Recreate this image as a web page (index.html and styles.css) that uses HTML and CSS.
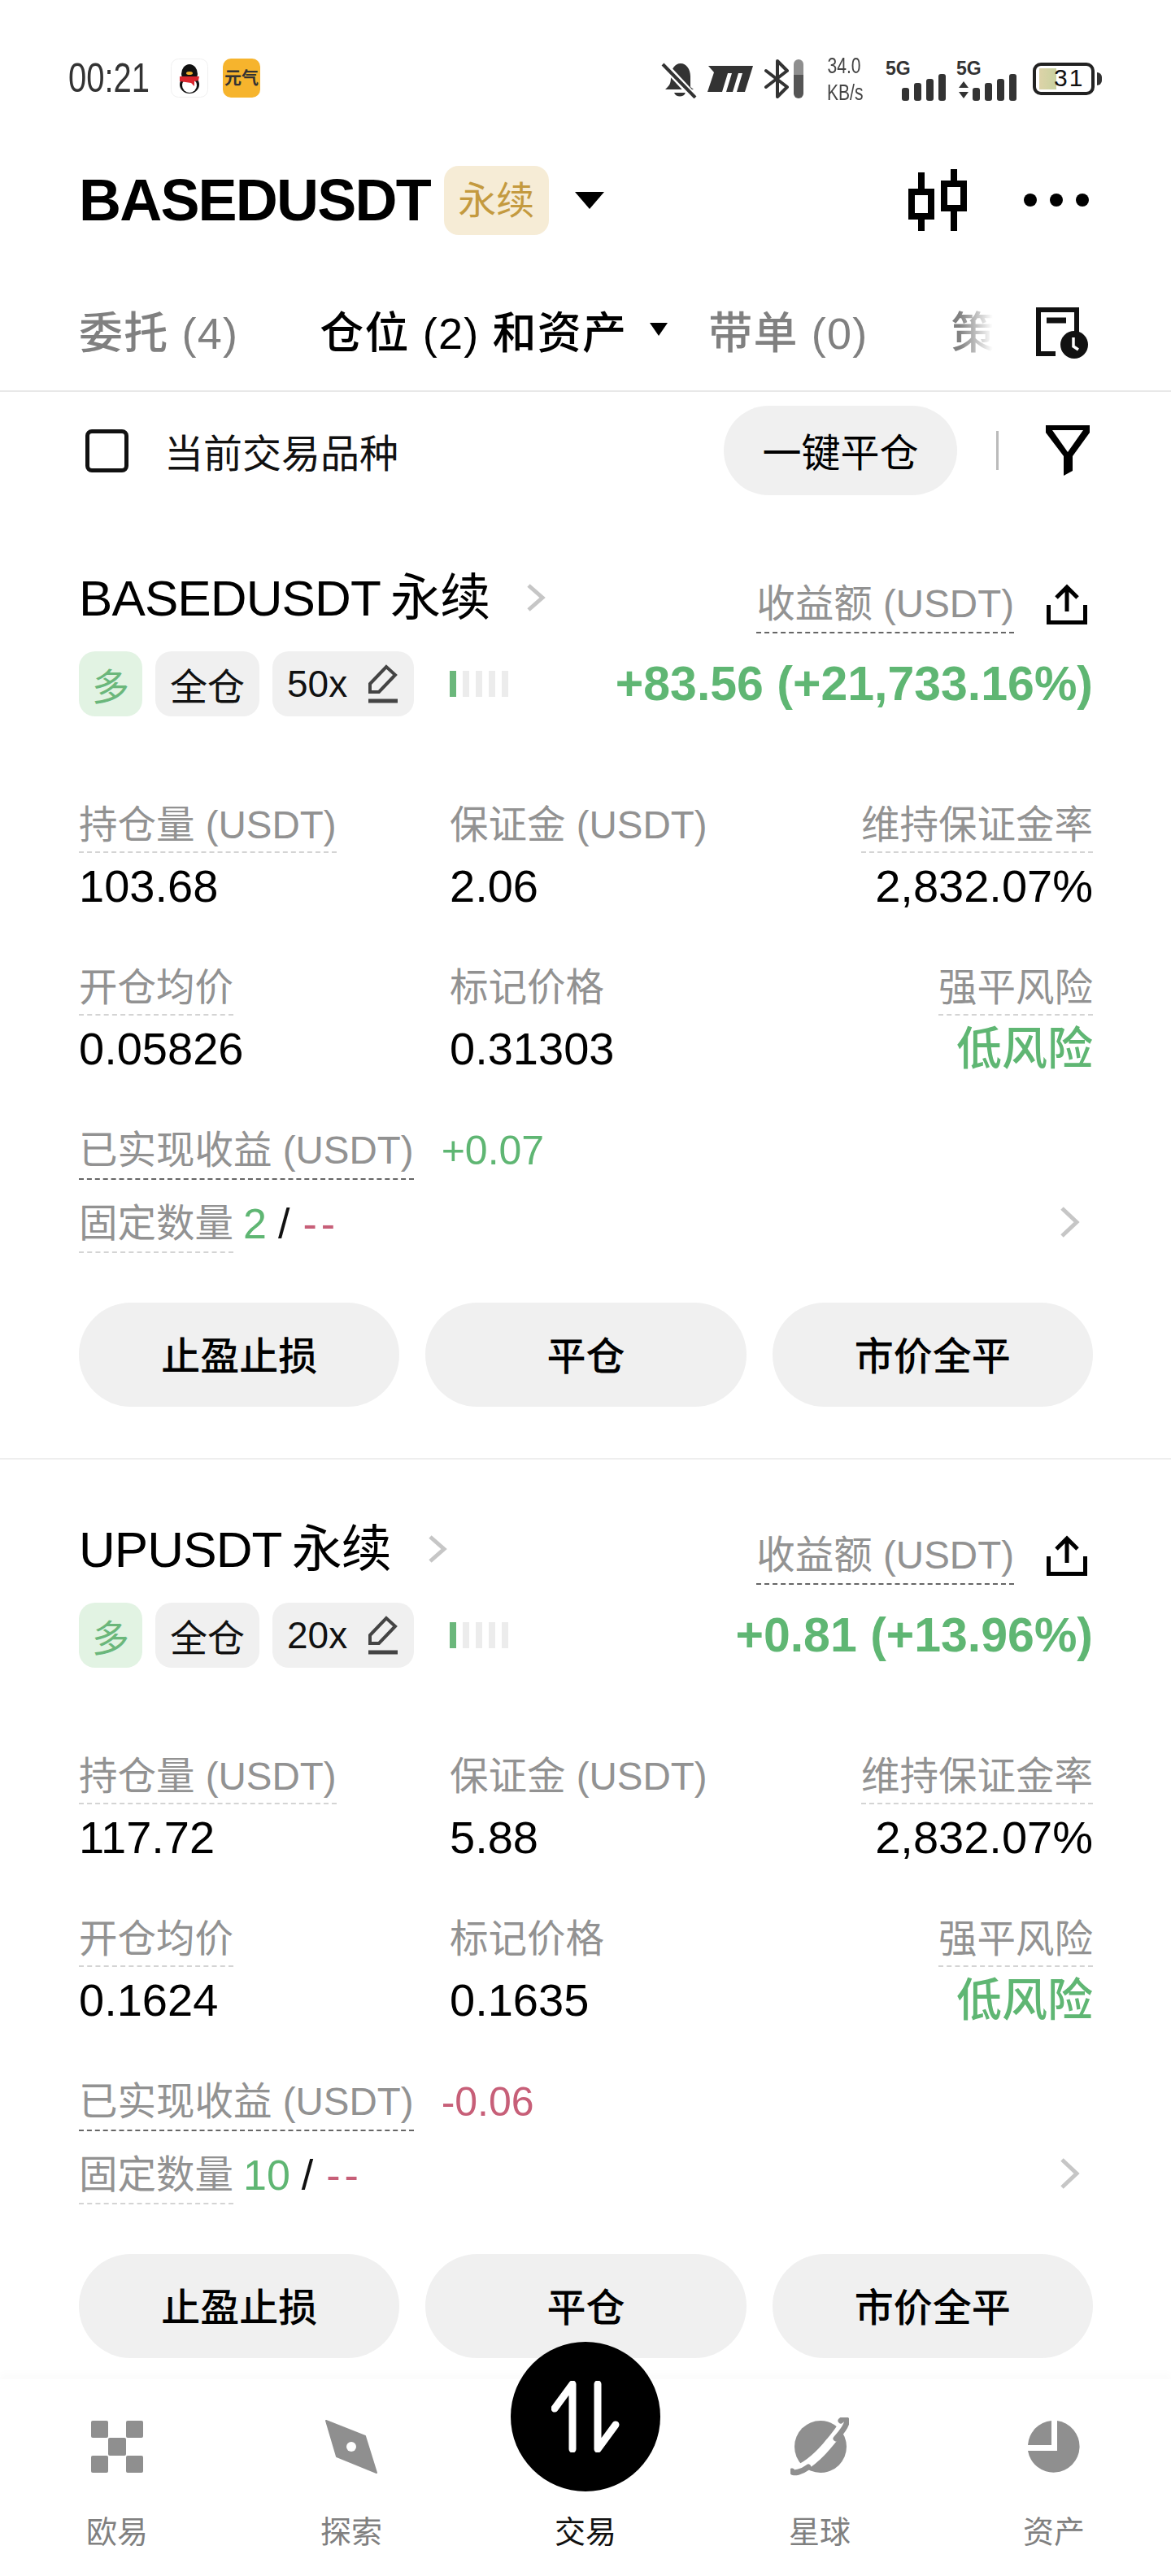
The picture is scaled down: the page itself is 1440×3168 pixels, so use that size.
FILE: index.html
```html
<!DOCTYPE html>
<html lang="zh-CN">
<head>
    <meta charset="UTF-8">
    <meta name="viewport" content="width=device-width, initial-scale=1.0">
    <title>BASEDUSDT 永续</title>
    <link rel="stylesheet" href="styles.css">
</head>
<body>
    <div class="statusBar">
        <div class="statusLeft">
            <span class="clock">00:21</span>
            <svg class="appIcon" width="46" height="48" viewBox="0 0 46 48">
                <rect x=".5" y=".5" width="45" height="47" rx="9" fill="#fff" stroke="#f0f0f0"/>
                <ellipse cx="23" cy="19" rx="10" ry="12" fill="#111"/>
                <ellipse cx="23" cy="32" rx="12" ry="11" fill="#111"/>
                <ellipse cx="23" cy="33" rx="9" ry="9" fill="#fff"/>
                <path d="M11 22h24l-1 5-5 1v6l-4-4-14-2z" fill="#d9262e"/>
                <ellipse cx="23" cy="18" rx="4" ry="2" fill="#f3b02e"/>
            </svg>
            <div class="yuanqi">元气</div>
        </div>
        <div class="statusRight">
            <svg width="46" height="48" viewBox="0 0 46 48">
                <path d="M8 34c3-3 4-6 4-13 0-9 5-16 12-16s12 7 12 16v13l4 3H5z" fill="#333"/>
                <path d="M16 41h14c-2 6-12 6-14 0z" fill="#333"/>
                <path d="M2 5l40 43" stroke="#fff" stroke-width="9"/>
                <path d="M2 6l40 41" stroke="#333" stroke-width="4"/>
            </svg>
            <svg class="gapIcon" width="56" height="32" viewBox="0 0 56 32">
                <path d="M1 0H56L46 32H36L43 9H38L31 32H23L30 9H25L18 32H0L8 8Z" fill="#333"/>
            </svg>
            <svg class="gapIcon" width="32" height="48" viewBox="0 0 32 48">
                <path d="M3 14l26 20-12 12V2l12 12L3 34" fill="none" stroke="#333" stroke-width="4" stroke-linejoin="round" stroke-linecap="round"/>
            </svg>
            <div class="volume"></div>
            <div class="speed"><span>34.0</span><span>KB/s</span></div>
            <div class="signal">
                <span class="fiveG">5G</span>
                <svg width="54" height="33" viewBox="0 0 54 33">
                    <rect x="0" y="17" width="9" height="16" rx="3" fill="#333"/>
                    <rect x="15" y="11" width="9" height="22" rx="3" fill="#333"/>
                    <rect x="30" y="6" width="9" height="27" rx="3" fill="#333"/>
                    <rect x="45" y="0" width="9" height="33" rx="3" fill="#333"/>
                </svg>
            </div>
            <div class="signal signalSecond">
                <span class="fiveG">5G</span>
                <svg width="72" height="33" viewBox="0 0 72 33">
                    <path d="M1 14l6-8 6 8zM1 19h12l-6 8z" fill="#333" transform="translate(0 3)"/>
                    <rect x="18" y="17" width="9" height="16" rx="3" fill="#333"/>
                    <rect x="33" y="11" width="9" height="22" rx="3" fill="#333"/>
                    <rect x="48" y="6" width="9" height="27" rx="3" fill="#333"/>
                    <rect x="63" y="0" width="9" height="33" rx="3" fill="#333"/>
                </svg>
            </div>
            <div class="battery"><div class="batteryFill"></div><span>31</span></div>
            <div class="batteryNub"></div>
        </div>
    </div>

    <div class="header">
        <h1>BASEDUSDT</h1>
        <span class="perpTag">永续</span>
        <span class="caret caretBig"></span>
        <svg class="klineIcon" width="72" height="76" viewBox="0 0 72 76">
            <path d="M16 4v72M56 0v76" stroke="#000" stroke-width="8"/>
            <rect x="4" y="28" width="24" height="30" fill="#fff" stroke="#000" stroke-width="8"/>
            <rect x="44" y="18" width="24" height="30" fill="#fff" stroke="#000" stroke-width="8"/>
        </svg>
        <div class="moreDots"><i></i><i></i><i></i></div>
    </div>

    <div class="tabs">
        <span class="tabItem">委托 (4)</span>
        <span class="tabItem tabActive">仓位 (2) 和资产</span>
        <span class="caret"></span>
        <span class="tabItem tabThird">带单 (0)</span>
        <span class="tabItem tabFaded">策</span>
        <svg class="historyIcon" width="66" height="66" viewBox="0 0 66 66">
            <path d="M24 57H3V3h47v27" fill="none" stroke="#111" stroke-width="6"/>
            <path d="M13 16h24" stroke="#111" stroke-width="7"/>
            <circle cx="47" cy="46" r="17" fill="#111"/>
            <path d="M46 37v11l6 4" fill="none" stroke="#fff" stroke-width="3.5"/>
        </svg>
    </div>

    <div class="filterRow">
        <span class="checkbox"></span>
        <span class="filterText">当前交易品种</span>
        <button class="closeAll">一键平仓</button>
        <span class="filterSep"></span>
        <svg class="filterIcon" width="54" height="62" viewBox="0 0 54 62">
            <path fill-rule="evenodd" d="M0 0H54V9L33 38V56L22 62V38L0 9ZM8 6L27 33 46 6Z" fill="#000"/>
        </svg>
    </div>

    <div class="card">
        <div class="titleRow">
            <span class="posName">BASEDUSDT 永续</span>
            <svg class="titleArrow" width="26" height="36" viewBox="0 0 26 36"><path d="M4 3l17 15L4 33" fill="none" stroke="#c6c6c6" stroke-width="5"/></svg>
            <span class="dash dashDark pnlLabel">收益额 (USDT)</span>
            <svg class="shareIcon" width="50" height="50" viewBox="0 0 50 50">
                <path d="M25 34V4M12 17L25 4l13 13M2.500 26v21.500h45V26" fill="none" stroke="#000" stroke-width="5"/>
            </svg>
        </div>
        <div class="metaRow">
            <span class="tag tagLong">多</span>
            <span class="tag">全仓</span>
            <span class="tag">50x
                <svg class="pencil" width="40" height="50" viewBox="0 0 40 50">
                    <path d="M4 25L24 4l11 10-20 21H4z" fill="none" stroke="#444" stroke-width="4"/>
                    <path d="M2 46h36" stroke="#444" stroke-width="5"/>
                </svg>
            </span>
            <div class="riskBars"><i class="barOn"></i><i></i><i></i><i></i><i></i></div>
            <span class="pnl up">+83.56 (+21,733.16%)</span>
        </div>
        <div class="grid">
            <div class="cell"><span class="dash">持仓量 (USDT)</span><div class="value">103.68</div></div>
            <div class="cell"><span class="plainLabel">保证金 (USDT)</span><div class="value">2.06</div></div>
            <div class="cell cellRight"><span class="dash">维持保证金率</span><div class="value">2,832.07%</div></div>
            <div class="cell"><span class="dash">开仓均价</span><div class="value">0.05826</div></div>
            <div class="cell"><span class="plainLabel">标记价格</span><div class="value">0.31303</div></div>
            <div class="cell cellRight"><span class="dash">强平风险</span><div class="value riskLow">低风险</div></div>
        </div>
        <div class="realized">
            <span class="dash dashDark">已实现收益 (USDT)</span>
            <span class="realizedValue up">+0.07</span>
        </div>
        <div class="fixedRow">
            <span class="dash">固定数量</span>
            <span class="fixedVal up">2</span>
            <span class="fixedSlash">/</span>
            <span class="fixedVal fixedDash down">--</span>
            <svg class="rowArrow" width="26" height="40" viewBox="0 0 26 40"><path d="M4 3l18 17L4 37" fill="none" stroke="#c6c6c6" stroke-width="5"/></svg>
        </div>
        <div class="actions">
            <button>止盈止损</button>
            <button>平仓</button>
            <button>市价全平</button>
        </div>
    </div>

    <div class="card lastCard">
        <div class="titleRow">
            <span class="posName">UPUSDT 永续</span>
            <svg class="titleArrow" width="26" height="36" viewBox="0 0 26 36"><path d="M4 3l17 15L4 33" fill="none" stroke="#c6c6c6" stroke-width="5"/></svg>
            <span class="dash dashDark pnlLabel">收益额 (USDT)</span>
            <svg class="shareIcon" width="50" height="50" viewBox="0 0 50 50">
                <path d="M25 34V4M12 17L25 4l13 13M2.500 26v21.500h45V26" fill="none" stroke="#000" stroke-width="5"/>
            </svg>
        </div>
        <div class="metaRow">
            <span class="tag tagLong">多</span>
            <span class="tag">全仓</span>
            <span class="tag">20x
                <svg class="pencil" width="40" height="50" viewBox="0 0 40 50">
                    <path d="M4 25L24 4l11 10-20 21H4z" fill="none" stroke="#444" stroke-width="4"/>
                    <path d="M2 46h36" stroke="#444" stroke-width="5"/>
                </svg>
            </span>
            <div class="riskBars"><i class="barOn"></i><i></i><i></i><i></i><i></i></div>
            <span class="pnl up">+0.81 (+13.96%)</span>
        </div>
        <div class="grid">
            <div class="cell"><span class="dash">持仓量 (USDT)</span><div class="value">117.72</div></div>
            <div class="cell"><span class="plainLabel">保证金 (USDT)</span><div class="value">5.88</div></div>
            <div class="cell cellRight"><span class="dash">维持保证金率</span><div class="value">2,832.07%</div></div>
            <div class="cell"><span class="dash">开仓均价</span><div class="value">0.1624</div></div>
            <div class="cell"><span class="plainLabel">标记价格</span><div class="value">0.1635</div></div>
            <div class="cell cellRight"><span class="dash">强平风险</span><div class="value riskLow">低风险</div></div>
        </div>
        <div class="realized">
            <span class="dash dashDark">已实现收益 (USDT)</span>
            <span class="realizedValue down">-0.06</span>
        </div>
        <div class="fixedRow">
            <span class="dash">固定数量</span>
            <span class="fixedVal up">10</span>
            <span class="fixedSlash">/</span>
            <span class="fixedVal fixedDash down">--</span>
            <svg class="rowArrow" width="26" height="40" viewBox="0 0 26 40"><path d="M4 3l18 17L4 37" fill="none" stroke="#c6c6c6" stroke-width="5"/></svg>
        </div>
        <div class="actions">
            <button>止盈止损</button>
            <button>平仓</button>
            <button>市价全平</button>
        </div>
    </div>

    <div class="tabBar">
        <div class="navItem">
            <svg width="72" height="72" viewBox="0 0 72 72" fill="#8f8f8f">
                <rect x="4" y="4" width="21" height="21" rx="2"/>
                <rect x="47" y="4" width="21" height="21" rx="2"/>
                <rect x="25" y="25" width="22" height="22" rx="2"/>
                <rect x="4" y="47" width="21" height="21" rx="2"/>
                <rect x="47" y="47" width="21" height="21" rx="2"/>
            </svg>
            <span>欧易</span>
        </div>
        <div class="navItem">
            <svg width="72" height="72" viewBox="0 0 72 72">
                <path d="M5 4l48 19 14 45-49-20z" fill="#8f8f8f" stroke="#8f8f8f" stroke-width="2" stroke-linejoin="round"/>
                <circle cx="36" cy="36" r="6" fill="#fff"/>
            </svg>
            <span>探索</span>
        </div>
        <div class="navItem navActive">
            <div class="tradeButton">
                <svg width="84" height="88" viewBox="0 0 84 88">
                    <path d="M26 84V4L4 34M57 4v80l22-30" fill="none" stroke="#fff" stroke-width="9" stroke-linecap="round" stroke-linejoin="round"/>
                </svg>
            </div>
            <div class="navSpacer"></div>
            <span>交易</span>
        </div>
        <div class="navItem">
            <svg width="72" height="72" viewBox="0 0 72 72">
                <circle cx="37" cy="36" r="32" fill="#8f8f8f"/>
                <path d="M4 66C16 62 30 52 44 36 56 22 66 10 64 4" fill="none" stroke="#fff" stroke-width="11"/>
                <path d="M2 66c1 4 12 1 20-5M56 26c9-10 15-19 13-23-2-2-5-1-7 1" fill="none" stroke="#8f8f8f" stroke-width="7" stroke-linecap="round"/>
            </svg>
            <span>星球</span>
        </div>
        <div class="navItem">
            <svg width="72" height="72" viewBox="0 0 72 72" fill="#8f8f8f">
                <path d="M33 4v30H4A32 32 0 0 1 33 4z"/>
                <path d="M40 4a32 32 0 1 1-36 37h36z"/>
            </svg>
            <span>资产</span>
        </div>
    </div>
</body>
</html>
```

FILE: styles.css
```css
* {
    box-sizing: border-box;
}

html, body {
    margin: 0;
    padding: 0;
}

body {
    width: 1440px;
    height: 3168px;
    overflow: hidden;
    background-color: #fff;
    color: #000;
    font-family: "Liberation Sans", "Noto Sans CJK SC", sans-serif;
}

button {
    font-family: inherit;
    border: none;
    color: #000;
    background-color: #f0f0f0;
}

/* status bar */
.statusBar {
    height: 170px;
    padding: 72px 85px 0 84px;
    display: flex;
    justify-content: space-between;
    align-items: flex-start;
}

.statusLeft {
    display: flex;
    align-items: center;
    height: 48px;
}

.clock {
    width: 126px;
    font-size: 50px;
    color: #333;
    transform: scaleX(.8);
    transform-origin: left center;
}

.yuanqi {
    width: 46px;
    height: 48px;
    margin-left: 18px;
    border-radius: 10px;
    background-color: #f6b42d;
    color: #333;
    font-size: 21px;
    font-weight: bold;
    line-height: 48px;
    text-align: center;
    white-space: nowrap;
}

.statusRight {
    display: flex;
    align-items: flex-start;
    height: 52px;
}

.gapIcon {
    margin-left: 11px;
}

.statusRight svg:first-child {
    margin-top: 1px;
}

.statusRight svg:nth-child(2) {
    margin-top: 9px;
}

.statusRight svg:nth-child(3) {
    margin-top: 1px;
    margin-left: 13px;
}

.volume {
    width: 12px;
    height: 48px;
    margin-top: 1px;
    margin-left: 5px;
    border-radius: 6px;
    background: linear-gradient(#8e8e8e 0 40%, #555 40%);
}

.speed {
    width: 54px;
    margin-left: 23px;
    margin-top: -7px;
    display: flex;
    flex-direction: column;
    font-size: 27px;
    line-height: 33px;
    color: #444;
    text-align: center;
    white-space: nowrap;
    transform: scaleX(.78);
}

.signal {
    width: 74px;
    height: 52px;
    margin-left: 24px;
    position: relative;
    display: flex;
    justify-content: flex-end;
    align-items: flex-end;
}

.signalSecond {
    width: 74px;
    margin-left: 13px;
}

.fiveG {
    position: absolute;
    left: 0;
    top: 2px;
    font-size: 23px;
    line-height: 20px;
    font-weight: bold;
    color: #333;
}

.battery {
    width: 76px;
    height: 40px;
    margin-left: 20px;
    margin-top: 5px;
    padding: 3px 4px;
    position: relative;
    border: 4px solid #222;
    border-radius: 10px;
    font-size: 30px;
    line-height: 28px;
    color: #111;
    text-align: center;
}

.battery span {
    position: absolute;
    left: 22px;
    top: 1px;
    letter-spacing: 2px;
}

.batteryFill {
    width: 21px;
    height: 100%;
    background: linear-gradient(90deg, #ddd3a8, #c9d2a0);
}

.batteryNub {
    width: 6px;
    height: 16px;
    margin-left: 3px;
    margin-top: 17px;
    border-radius: 0 6px 6px 0;
    background-color: #333;
}

/* header */
.header {
    height: 152px;
    padding: 0 101px 0 97px;
    display: flex;
    align-items: center;
}

.header h1 {
    margin: 0;
    font-size: 72px;
    line-height: 1;
    letter-spacing: -1.8px;
}

.perpTag {
    width: 129px;
    height: 85px;
    margin-left: 17px;
    border-radius: 18px;
    background-color: #f6ecd6;
    color: #c49a3f;
    font-size: 47px;
    line-height: 85px;
    text-align: center;
}

.caret {
    width: 0;
    height: 0;
    border-left: 11px solid transparent;
    border-right: 11px solid transparent;
    border-top: 16px solid #000;
}

.caretBig {
    margin-left: 32px;
    border-left-width: 18px;
    border-right-width: 18px;
    border-top: 21px solid #000;
}

.klineIcon {
    margin-left: auto;
}

.moreDots {
    margin-left: 70px;
    display: flex;
    gap: 16px;
}

.moreDots i {
    width: 16px;
    height: 16px;
    border-radius: 50%;
    background-color: #000;
}

/* tabs */
.tabs {
    height: 160px;
    padding: 8px 100px 0 97px;
    display: flex;
    align-items: center;
    border-bottom: 2px solid #e8e8e8;
    font-size: 54px;
    font-weight: 500;
    letter-spacing: 1.2px;
    white-space: nowrap;
}

.tabItem {
    color: #808080;
}

.tabActive {
    margin-left: 100px;
    color: #000;
}

.tabs .caret {
    margin-left: 28px;
}

.tabThird {
    margin-left: 50px;
}

.tabFaded {
    width: 52px;
    margin-left: 102px;
    -webkit-mask-image: linear-gradient(90deg, #000 20%, transparent);
    mask-image: linear-gradient(90deg, #000 20%, transparent);
}

.historyIcon {
    margin-left: auto;
    margin-top: 12px;
}

/* filter row */
.filterRow {
    height: 110px;
    margin: 17px 0 16px;
    padding: 0 100px 0 105px;
    display: flex;
    align-items: center;
}

.checkbox {
    width: 53px;
    height: 53px;
    border: 5px solid #111;
    border-radius: 8px;
}

.filterText {
    margin-left: 44px;
    font-size: 48px;
    color: #111;
}

.closeAll {
    width: 287px;
    height: 110px;
    margin-left: auto;
    padding-bottom: 4px;
    border-radius: 55px;
    font-size: 48px;
}

.filterSep {
    width: 3px;
    height: 48px;
    margin-left: 48px;
    background-color: #bbb;
}

.filterIcon {
    margin-left: 58px;
}

/* position card */
.card {
    padding: 66px 96px 63px 97px;
    border-bottom: 2px solid #eee;
}

.lastCard {
    padding-bottom: 26px;
    border-bottom: none;
}

.titleRow {
    height: 90px;
    display: flex;
    align-items: flex-end;
}

.posName {
    font-size: 62px;
    line-height: 90px;
    letter-spacing: -.9px;
    word-spacing: -3px;
    white-space: nowrap;
}

.titleArrow {
    margin-left: 44px;
    margin-bottom: 28px;
}

.pnlLabel {
    margin-left: auto;
    margin-bottom: 2px;
}

.shareIcon {
    margin-left: 40px;
    margin-right: 7px;
    margin-bottom: 13px;
}

.metaRow {
    height: 80px;
    margin-top: 20px;
    display: flex;
    align-items: center;
    gap: 16px;
}

.tag {
    height: 80px;
    padding: 0 18px;
    display: flex;
    align-items: center;
    gap: 24px;
    border-radius: 20px;
    background-color: #f0f0f0;
    font-size: 46px;
    color: #111;
    white-space: nowrap;
}

.tagLong {
    padding: 0 16px;
    background-color: #e2f3e3;
    color: #6bb77b;
}

.riskBars {
    margin-left: 28px;
    display: flex;
    gap: 8px;
}

.riskBars i {
    width: 8px;
    height: 32px;
    background-color: #ececec;
}

.riskBars .barOn {
    background-color: #6bb77b;
}

.pnl {
    margin-left: auto;
    font-size: 59px;
    font-weight: bold;
    white-space: nowrap;
}

.up {
    color: #5fb673;
}

.down {
    color: #c75f78;
}

/* numbers */
.dash, .plainLabel {
    display: inline-block;
    padding-bottom: 4px;
    font-size: 47.500px;
    line-height: 56px;
    color: #929292;
    white-space: nowrap;
}

.dash {
    border-bottom: 2px dashed #d4d4d4;
}

.plainLabel {
    border-bottom: 2px solid transparent;
}

.dashDark {
    padding-bottom: 6px;
    border-bottom-color: #666;
}

.grid {
    margin-top: 106px;
    display: grid;
    grid-template-columns: 456px 1fr auto;
    row-gap: 65px;
}

.cell {
    height: 135px;
}

.cellRight {
    text-align: right;
}

.value {
    height: 64px;
    margin-top: 9px;
    font-size: 56px;
    line-height: 64px;
    color: #000;
}

.value.riskLow {
    color: #5fb673;
    font-weight: 500;
}

.realized {
    margin-top: 65px;
    display: flex;
    align-items: flex-start;
}

.realizedValue {
    margin-left: 34px;
    font-size: 50px;
    line-height: 56px;
}

.fixedRow {
    margin-top: 26px;
    display: flex;
    align-items: flex-start;
    font-size: 52px;
    line-height: 56px;
}

.fixedRow .dash {
    padding-bottom: 6px;
}

.fixedVal {
    margin-left: 12px;
}

.fixedSlash {
    margin-left: 14px;
    color: #111;
}

.fixedSlash + .fixedVal {
    margin-left: 16px;
}

.fixedDash {
    letter-spacing: 5px;
}

.rowArrow {
    margin-left: auto;
    margin-right: 16px;
    margin-top: 6px;
}

.actions {
    margin-top: 61px;
    display: grid;
    grid-template-columns: repeat(3, 1fr);
    gap: 32px;
}

.actions button {
    height: 128px;
    padding-bottom: 6px;
    border-radius: 64px;
    font-size: 48px;
    font-weight: 500;
}

/* bottom tab bar */
.tabBar {
    height: 243px;
    display: flex;
    box-shadow: 0 -8px 8px rgba(0, 0, 0, .015);
    background-color: #fff;
    position: relative;
}

.navItem {
    width: 288px;
    padding-top: 47px;
    display: flex;
    flex-direction: column;
    align-items: center;
    gap: 46px;
    font-size: 38px;
    line-height: 46px;
    color: #808080;
}

.navActive {
    color: #111;
    position: relative;
}

.navSpacer {
    height: 72px;
}

.tradeButton {
    width: 184px;
    height: 184px;
    position: absolute;
    top: -46px;
    left: 52px;
    display: flex;
    align-items: center;
    justify-content: center;
    border-radius: 50%;
    background-color: #000;
}
```
